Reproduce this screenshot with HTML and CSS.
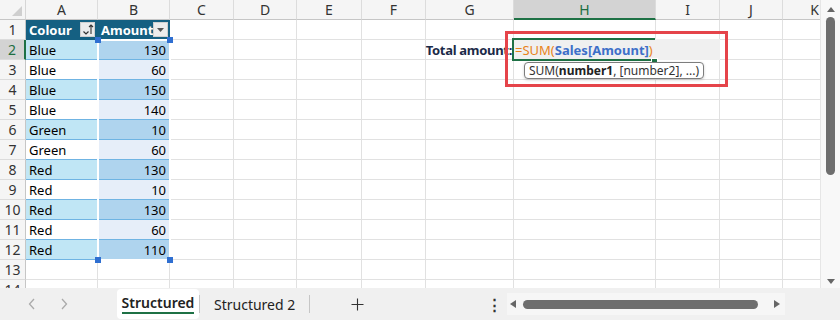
FILE: index.html
```html
<!DOCTYPE html>
<html>
<head>
<meta charset="utf-8">
<link rel="stylesheet" href="styles.css">
</head>
<body>
<div class="app">
  <div class="main">
    <div class="sheet">
      <div class="grid">
        <div class="corner"><span class="tri"></span></div>
        <div class="h">A</div><div class="h">B</div><div class="h">C</div><div class="h">D</div><div class="h">E</div><div class="h">F</div><div class="h">G</div><div class="h hsel">H</div><div class="h">I</div><div class="h">J</div><div class="h">K</div>

        <div class="rh">1</div>
        <div class="th">Colour<span class="fbtn"><svg width="13" height="13" viewBox="0 0 13 13"><path d="M2.5 8.5 L5 11 L7.5 8.5" fill="none" stroke="#333" stroke-width="1.2"/><path d="M10 2 V11 M8 4 L10 2 L12 4" fill="none" stroke="#333" stroke-width="1.1"/></svg></span></div>
        <div class="th">Amount<span class="fbtn"><svg width="13" height="13" viewBox="0 0 13 13"><path d="M3 5 H10 L6.5 9 Z" fill="#555"/></svg></span></div>
        <div class="c"></div><div class="c"></div><div class="c"></div><div class="c"></div><div class="c"></div><div class="c"></div><div class="c"></div><div class="c"></div><div class="c"></div>

        <div class="rh rsel">2</div>
        <div class="ta band">Blue</div><div class="tb band">130</div>
        <div class="c"></div><div class="c"></div><div class="c"></div><div class="c"></div>
        <div class="c label">Total amount:</div>
        <div class="c active">
          <div class="editor"><span class="op">=SUM(</span><span class="ref">Sales[Amount]</span><span class="op">)</span></div>
          <div class="outline"></div>
          <div class="fill-handle"></div>
          <div class="tip">SUM(<b>number1</b>, [number2], ...)</div>
        </div>
        <div class="c"></div><div class="c"></div><div class="c"></div>

        <div class="rh">3</div>
        <div class="ta">Blue</div><div class="tb">60</div>
        <div class="c"></div><div class="c"></div><div class="c"></div><div class="c"></div><div class="c"></div><div class="c"></div><div class="c"></div><div class="c"></div><div class="c"></div>

        <div class="rh">4</div>
        <div class="ta band">Blue</div><div class="tb band">150</div>
        <div class="c"></div><div class="c"></div><div class="c"></div><div class="c"></div><div class="c"></div><div class="c"></div><div class="c"></div><div class="c"></div><div class="c"></div>

        <div class="rh">5</div>
        <div class="ta">Blue</div><div class="tb">140</div>
        <div class="c"></div><div class="c"></div><div class="c"></div><div class="c"></div><div class="c"></div><div class="c"></div><div class="c"></div><div class="c"></div><div class="c"></div>

        <div class="rh">6</div>
        <div class="ta band">Green</div><div class="tb band">10</div>
        <div class="c"></div><div class="c"></div><div class="c"></div><div class="c"></div><div class="c"></div><div class="c"></div><div class="c"></div><div class="c"></div><div class="c"></div>

        <div class="rh">7</div>
        <div class="ta">Green</div><div class="tb">60</div>
        <div class="c"></div><div class="c"></div><div class="c"></div><div class="c"></div><div class="c"></div><div class="c"></div><div class="c"></div><div class="c"></div><div class="c"></div>

        <div class="rh">8</div>
        <div class="ta band">Red</div><div class="tb band">130</div>
        <div class="c"></div><div class="c"></div><div class="c"></div><div class="c"></div><div class="c"></div><div class="c"></div><div class="c"></div><div class="c"></div><div class="c"></div>

        <div class="rh">9</div>
        <div class="ta">Red</div><div class="tb">10</div>
        <div class="c"></div><div class="c"></div><div class="c"></div><div class="c"></div><div class="c"></div><div class="c"></div><div class="c"></div><div class="c"></div><div class="c"></div>

        <div class="rh">10</div>
        <div class="ta band">Red</div><div class="tb band">130</div>
        <div class="c"></div><div class="c"></div><div class="c"></div><div class="c"></div><div class="c"></div><div class="c"></div><div class="c"></div><div class="c"></div><div class="c"></div>

        <div class="rh">11</div>
        <div class="ta">Red</div><div class="tb">60</div>
        <div class="c"></div><div class="c"></div><div class="c"></div><div class="c"></div><div class="c"></div><div class="c"></div><div class="c"></div><div class="c"></div><div class="c"></div>

        <div class="rh">12</div>
        <div class="ta band">Red</div><div class="tb band">110</div>
        <div class="c"></div><div class="c"></div><div class="c"></div><div class="c"></div><div class="c"></div><div class="c"></div><div class="c"></div><div class="c"></div><div class="c"></div>

        <div class="rh">13</div>
        <div class="c"></div><div class="c"></div><div class="c"></div><div class="c"></div><div class="c"></div><div class="c"></div><div class="c"></div><div class="c"></div><div class="c"></div><div class="c"></div><div class="c"></div>

        <div class="rh">14</div>
        <div class="c"></div><div class="c"></div><div class="c"></div><div class="c"></div><div class="c"></div><div class="c"></div><div class="c"></div><div class="c"></div><div class="c"></div><div class="c"></div><div class="c"></div>
      </div>

      <div class="ants">
        <span class="hd tl"></span><span class="hd tr"></span><span class="hd bl"></span><span class="hd br"></span>
      </div>
      <div class="annot"></div>
    </div>

    <div class="vscroll">
      <svg class="arr" width="10" height="8" viewBox="0 0 10 8"><path d="M1 7 L5 2 L9 7 Z" fill="#666"/></svg>
      <div class="vthumb"></div>
      <div class="vspace"></div>
      <svg class="arr" width="10" height="8" viewBox="0 0 10 8"><path d="M1 1 L9 1 L5 6 Z" fill="#666"/></svg>
    </div>
  </div>

  <div class="tabbar">
    <div class="nav">
      <svg width="8" height="12" viewBox="0 0 8 12"><path d="M6 1 L1.5 6 L6 11" fill="none" stroke="#aaa" stroke-width="1.3"/></svg>
      <svg width="8" height="12" viewBox="0 0 8 12"><path d="M2 1 L6.5 6 L2 11" fill="none" stroke="#aaa" stroke-width="1.3"/></svg>
    </div>
    <div class="tab active"><span>Structured</span></div>
    <div class="sep"></div>
    <div class="tab">Structured 2</div>
    <div class="sep"></div>
    <div class="plus"><svg width="13" height="13" viewBox="0 0 13 13"><path d="M6.5 0.5 V12.5 M0.5 6.5 H12.5" stroke="#333" stroke-width="1.1"/></svg></div>
    <div class="more">⋮</div>
    <div class="hscroll">
      <svg width="8" height="10" viewBox="0 0 8 10"><path d="M7 1 V9 L1 5 Z" fill="#666"/></svg>
      <div class="hthumb"></div>
      <svg width="8" height="10" viewBox="0 0 8 10"><path d="M1 1 V9 L7 5 Z" fill="#666"/></svg>
    </div>
  </div>
</div>
</body>
</html>
```

FILE: styles.css
```css
body {
  margin: 0;
  font-family: "Noto Sans", "Open Sans", sans-serif;
  background: #fff;
}
.app {
  width: 840px;
  height: 320px;
  display: flex;
  flex-direction: column;
  overflow: hidden;
}
.main {
  display: flex;
  height: 288px;
}
.sheet {
  position: relative;
  width: 820px;
  overflow: hidden;
}
.grid {
  display: grid;
  grid-template-columns: 26px 72px 72px 64px 63px 65px 64px 88px 142px 64px 63px 64px;
  grid-auto-rows: 20px;
  width: 847px;
}
.grid > div {
  box-sizing: border-box;
  border-right: 1px solid #e1e1e1;
  border-bottom: 1px solid #e1e1e1;
  font-size: 13px;
  display: flex;
  align-items: center;
  padding: 0 3px;
  white-space: nowrap;
  color: #000;
}
.grid > .corner {
  background: #f5f5f5;
  border-right-color: #d6d6d6;
  border-bottom-color: #c6c6c6;
  position: relative;
}
.tri {
  position: absolute;
  right: 3px;
  bottom: 3px;
  width: 0;
  height: 0;
  border-left: 10px solid transparent;
  border-bottom: 10px solid #cfcfcf;
}
.grid > .h {
  background: #f5f5f5;
  justify-content: center;
  color: #333;
  font-size: 14px;
  border-right-color: #dcdcdc;
  border-bottom-color: #c6c6c6;
}
.grid > .hsel {
  background: #d3d3d3;
  color: #1e6e42;
  border-bottom: 2px solid #1e7145;
}
.grid > .rh {
  background: #f5f5f5;
  justify-content: center;
  color: #333;
  font-size: 14px;
  padding: 0;
  border-right-color: #c6c6c6;
  border-bottom-color: #dcdcdc;
}
.grid > .rsel {
  background: #d3d3d3;
  color: #1e6e42;
  border-right: 2px solid #1e7145;
}
.grid > .th {
  background: #156082;
  border-color: #156082;
  color: #fff;
  font-weight: 700;
  justify-content: space-between;
  padding: 0 2px 0 3px;
}
.fbtn {
  width: 15px;
  height: 15px;
  box-sizing: border-box;
  background: #ececec;
  border: 1px solid #d0d0d0;
  display: flex;
  align-items: center;
  justify-content: center;
}
.grid > .ta {
  background: #fff;
  border-right-color: #fff;
  border-bottom-color: #6fb4e3;
}
.grid > .ta.band {
  background: #c0e6f5;
  border-right-color: #c0e6f5;
}
.grid > .tb {
  background: #e6eef9;
  justify-content: flex-end;
  border-bottom-color: #6fb4e3;
}
.grid > .tb.band {
  background: #afd4ee;
}
.grid > .label {
  justify-content: flex-end;
  font-weight: 700;
  color: #1b2a48;
  letter-spacing: -0.3px;
  padding: 0 1px 0 0;
  border-right-color: transparent;
}
.grid > .active {
  position: relative;
  overflow: visible;
  padding: 0;
}
.editor {
  position: absolute;
  left: -1px;
  top: -1px;
  width: 207px;
  height: 21px;
  background: #f0f0f0;
  display: flex;
  align-items: center;
  padding-left: 2px;
  box-sizing: border-box;
  font-size: 13px;
  z-index: 2;
}
.op { color: #e8831a; }
.ref { color: #3d6fc8; font-weight: 700; }
.outline {
  position: absolute;
  left: -2px;
  top: -2px;
  width: 143px;
  height: 23px;
  box-sizing: border-box;
  border: 2px solid #1e7145;
  border-right: none;
  z-index: 3;
}
.fill-handle {
  position: absolute;
  left: 137px;
  top: 18px;
  width: 5px;
  height: 5px;
  background: #1e7145;
  border: 1px solid #fff;
  z-index: 4;
}
.tip {
  position: absolute;
  left: 10px;
  top: 22px;
  height: 17px;
  box-sizing: border-box;
  padding: 0 4px;
  display: flex;
  align-items: center;
  background: #fff;
  border: 1px solid #7d7d7d;
  border-radius: 4px;
  font-size: 12px;
  color: #333;
  box-shadow: 0 1px 3px rgba(0,0,0,0.18);
  z-index: 5;
}
.tip b { font-weight: 700; color: #222; }
.ants {
  position: absolute;
  left: 97px;
  top: 39px;
  width: 74px;
  height: 222px;
  box-sizing: border-box;
  border: 2px dashed #1e6e42;
  z-index: 2;
}
.ants::before {
  content: "";
  position: absolute;
  inset: -2px;
  border: 2px solid #fff;
  z-index: -1;
}
.hd {
  position: absolute;
  width: 6px;
  height: 6px;
  background: #2f6fd1;
}
.hd.tl { left: -4px; top: -4px; }
.hd.tr { right: -4px; top: -4px; }
.hd.bl { left: -4px; bottom: -4px; }
.hd.br { right: -4px; bottom: -4px; }
.annot {
  position: absolute;
  left: 505px;
  top: 31px;
  width: 223px;
  height: 56px;
  box-sizing: border-box;
  border: 3px solid #e5444a;
  z-index: 6;
}
.vscroll {
  width: 20px;
  background: #f8f8f8;
  border-left: 1px solid #e6e6e6;
  box-sizing: border-box;
  display: flex;
  flex-direction: column;
  align-items: center;
  padding: 5px 0 2px;
}
.vthumb {
  width: 9px;
  height: 158px;
  margin-top: 4px;
  border-radius: 5px;
  background: #6e6e6e;
}
.vspace { flex: 1; }
.tabbar {
  height: 32px;
  background: #f0f0f0;
  display: flex;
  align-items: center;
  font-size: 14px;
  color: #222;
}
.nav {
  width: 117px;
  box-sizing: border-box;
  padding-left: 28px;
  display: flex;
  gap: 24px;
  align-items: center;
}
.tab {
  padding: 0 14px;
  height: 30px;
  display: flex;
  align-items: center;
}
.tab.active {
  width: 82px;
  box-sizing: border-box;
  padding: 0;
  justify-content: center;
  background: #fff;
  border-radius: 4px;
  align-self: flex-start;
  margin-top: 1px;
  font-weight: 600;
}
.tab.active span {
  border-bottom: 2px solid #1e7145;
  line-height: 18px;
}
.sep {
  width: 1px;
  height: 18px;
  background: #c6c6c6;
  margin: 0 0 0 4px;
}
.tab + .sep { margin-left: 0; }
.plus {
  margin-left: 41px;
  display: flex;
}
.more {
  width: 10px;
  text-align: center;
  margin-left: 123px;
  color: #333;
  font-size: 15px;
  font-weight: 700;
}
.hscroll {
  margin-left: 10px;
  width: 278px;
  height: 22px;
  background: #f6f6f6;
  display: flex;
  align-items: center;
  padding: 0 2px;
  box-sizing: border-box;
}
.hthumb {
  width: 235px;
  height: 9px;
  border-radius: 5px;
  background: #6e6e6e;
  margin: 0 15px 0 6px;
}
```
